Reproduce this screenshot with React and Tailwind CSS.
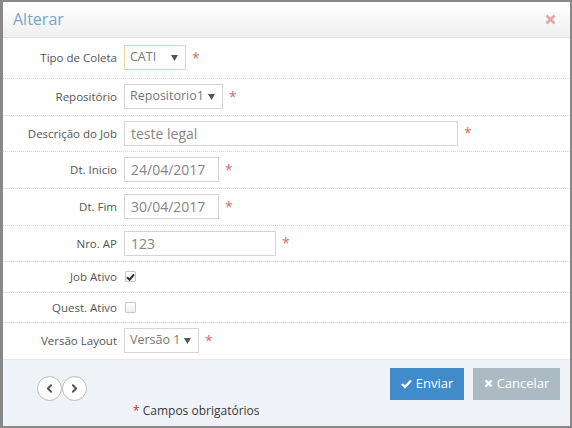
import React from "react";
import { ChevronLeft, ChevronRight } from "lucide-react";

const font = { fontFamily: '"Open Sans", "Noto Sans", sans-serif' };

function Star({ className = "" }) {
  return <span className={"text-[#d16e6c] text-[14px] leading-none " + className}>*</span>;
}

function Arrow() {
  return (
    <svg width="7" height="6" viewBox="0 0 7 6" className="ml-auto shrink-0">
      <path d="M0 0 L7 0 L3.5 6 Z" fill="#555" />
    </svg>
  );
}

function Row({ label, h, children, last }) {
  return (
    <div
      className={
        "flex items-center " + (last ? "" : "border-b border-dotted border-[#d5d5d5]")
      }
      style={{ height: h }}
    >
      <div className="w-[121px] text-right pr-[7px] text-[11.5px] text-[#555]">{label}</div>
      <div className="flex items-center">{children}</div>
    </div>
  );
}

function Select({ value, w, focused }) {
  return (
    <div
      className={
        "flex items-center h-[25px] pl-[5px] pr-[7px] text-[12.5px] text-[#777] bg-white border whitespace-nowrap " +
        (focused ? "border-[#f0d3a0]" : "border-[#d5d5d5]")
      }
      style={{ width: w }}
    >
      <span>{value}</span>
      <Arrow />
    </div>
  );
}

function Input({ value, w }) {
  return (
    <div
      className="flex items-center h-[25px] px-[6px] text-[14px] text-[#858585] bg-white border border-[#d5d5d5] whitespace-nowrap"
      style={{ width: w }}
    >
      {value}
    </div>
  );
}

function Check({ checked }) {
  return (
    <div className="w-[11px] h-[11px] ml-[1px] border border-[#c8c8c8] rounded-[1px] bg-gradient-to-b from-white to-[#eee] flex items-center justify-center">
      {checked && (
        <svg width="9" height="8" viewBox="0 0 9 8">
          <path d="M1 4.2 L3.5 6.7 L8 1.5" stroke="#333" strokeWidth="2" fill="none" />
        </svg>
      )}
    </div>
  );
}

export default function App() {
  return (
    <div className="w-[572px] h-[428px] bg-[#888] p-[2px] pl-[3px] pt-[2px]" style={font}>
      <div className="w-full h-full bg-white flex flex-col">
        <div className="h-[36px] flex items-center justify-between px-[10px] bg-gradient-to-b from-white to-[#f0f0f0] border-b border-[#e0e0e0]">
          <span className="text-[16px] text-[#7aa6cc]">Alterar</span>
          <svg width="11" height="11" viewBox="0 0 11 11" className="mr-[4px]">
            <path d="M1.5 1.5 L9.5 9.5 M9.5 1.5 L1.5 9.5" stroke="#e0a9a3" strokeWidth="2.6" />
          </svg>
        </div>
        <div className="flex-1 flex flex-col">
          <Row label="Tipo de Coleta" h={41}>
            <Select value="CATI" w={62} focused />
            <Star className="ml-[6px]" />
          </Row>
          <Row label="Repositório" h={37}>
            <Select value="Repositorio1" w={99} />
            <Star className="ml-[6px]" />
          </Row>
          <Row label="Descrição do Job" h={36}>
            <Input value="teste legal" w={334} />
            <Star className="ml-[6px]" />
          </Row>
          <Row label="Dt. Inicio" h={37}>
            <Input value="24/04/2017" w={95} />
            <Star className="ml-[6px]" />
          </Row>
          <Row label="Dt. Fim" h={37}>
            <Input value="30/04/2017" w={95} />
            <Star className="ml-[6px]" />
          </Row>
          <Row label="Nro. AP" h={36}>
            <Input value="123" w={152} />
            <Star className="ml-[6px]" />
          </Row>
          <Row label="Job Ativo" h={31}>
            <Check checked />
          </Row>
          <Row label="Quest. Ativo" h={30}>
            <Check />
          </Row>
          <Row label="Versão Layout" h={36} last>
            <Select value="Versão 1" w={75} />
            <Star className="ml-[6px]" />
          </Row>
        </div>
        <div className="h-[68px] bg-[#eff3f8] border-t border-[#e4e9ee] flex">
          <div className="flex flex-col pl-[34px] pt-[16px]">
            <div className="flex">
              <div className="w-[25px] h-[25px] rounded-full border border-[#bbb] bg-white flex items-center justify-center">
                <ChevronLeft size={13} strokeWidth={3.5} color="#555" />
              </div>
              <div className="w-[25px] h-[25px] rounded-full border border-[#bbb] bg-white flex items-center justify-center">
                <ChevronRight size={13} strokeWidth={3.5} color="#555" />
              </div>
            </div>
          </div>
          <div className="flex-1 flex flex-col">
            <div className="flex justify-end gap-[9px] pr-[10px] pt-[8px]">
              <button className="w-[74px] h-[32px] bg-[#428bca] text-white text-[13px] flex items-center justify-center gap-[4px]">
                <svg width="11" height="10" viewBox="0 0 11 10">
                  <path d="M1 5 L4 8 L10 1.5" stroke="white" strokeWidth="2.4" fill="none" />
                </svg>
                Enviar
              </button>
              <button className="w-[87px] h-[32px] bg-[#abbac3] text-white text-[13px] flex items-center justify-center gap-[4px]">
                <svg width="9" height="9" viewBox="0 0 9 9">
                  <path d="M1.5 1.5 L7.5 7.5 M7.5 1.5 L1.5 7.5" stroke="white" strokeWidth="2.4" />
                </svg>
                Cancelar
              </button>
            </div>
            <div className="mt-[2px] pl-[46px] text-[12px] text-[#393939]">
              <span className="text-[#d12727]">*</span> Campos obrigatórios
            </div>
          </div>
        </div>
      </div>
    </div>
  );
}
